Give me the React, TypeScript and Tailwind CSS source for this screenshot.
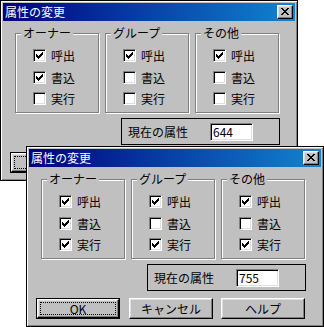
import React from "react";

const CHECK = [
  [6, 0, 1], [5, 1, 2], [0, 2, 1], [4, 2, 3], [0, 3, 2], [3, 3, 3], [0, 4, 5], [1, 5, 3], [2, 6, 1],
];
const XG = [
  [0, 0, 2], [6, 0, 2], [1, 1, 2], [5, 1, 2], [2, 2, 4], [3, 3, 2], [2, 4, 4], [1, 5, 2], [5, 5, 2], [0, 6, 2], [6, 6, 2],
];
const toPath = (r: number[][]) => r.map(([x, y, w]) => `M${x} ${y}h${w}v1h-${w}z`).join("");

function CheckBox({ checked, label }: { checked: boolean; label: string }) {
  return (
    <div className="flex items-center gap-[5px] h-[13px]">
      <div className="w-[13px] h-[13px] bg-white border border-t-[#808080] border-l-[#808080] border-b-white border-r-white shadow-[inset_1px_1px_0_#000,inset_-1px_-1px_0_#dfdfdf] flex items-start pl-[2px] pt-[2px] shrink-0">
        {checked && (
          <svg width="7" height="7" viewBox="0 0 7 7" shapeRendering="crispEdges">
            <path d={toPath(CHECK)} fill="#000" />
          </svg>
        )}
      </div>
      <span className="text-[12px] leading-[13px] text-black">{label}</span>
    </div>
  );
}

function Group({ title, values }: { title: string; values: boolean[] }) {
  const labels = ["呼出", "書込", "実行"];
  return (
    <div className="relative w-[84px] pt-[6px]">
      <div className="h-[80px] border border-[#808080] shadow-[1px_1px_0_#fff,inset_1px_1px_0_#fff] pl-[17px] pt-[15px] flex flex-col gap-[8.5px]">
        {labels.map((l, i) => (
          <CheckBox key={l} checked={values[i]} label={l} />
        ))}
      </div>
      <span className="absolute left-[6px] top-0 px-[2px] bg-[#c0c0c0] text-[12px] leading-[12px] text-black">{title}</span>
    </div>
  );
}

function Btn({ children, def, cls }: { children: React.ReactNode; def?: boolean; cls: string }) {
  const inner = (
    <div className="relative flex-1 self-stretch flex items-center justify-center border border-t-white border-l-white border-b-black border-r-black shadow-[inset_-1px_-1px_0_#808080,inset_1px_1px_0_#dfdfdf] text-[12px] leading-[13px] text-black">
      {children}
      {def && <div className="absolute inset-[2px] border border-dotted border-black" />}
    </div>
  );
  return (
    <div className={`w-[84px] h-[21px] flex ${def ? "border border-black" : ""} ${cls}`}>{inner}</div>
  );
}

function Dialog({ pos, owner, group, other, value }: { pos: string; owner: boolean[]; group: boolean[]; other: boolean[]; value: string }) {
  return (
    <div className={`absolute ${pos} w-[298px] h-[181px] bg-[#c0c0c0] border border-black shadow-[inset_1px_1px_0_#fff,inset_-1px_-1px_0_#808080] p-[2px] flex flex-col`}>
      <div className="h-[18px] bg-[linear-gradient(to_right,#000080,#1084d0)] flex items-center justify-between pl-[2px] pr-[2px]">
        <span className="text-white text-[12px] leading-[14px]">属性の変更</span>
        <div className="w-[16px] h-[14px] bg-[#c0c0c0] border border-t-white border-l-white border-b-black border-r-black shadow-[inset_-1px_-1px_0_#808080,inset_1px_1px_0_#dfdfdf] flex items-start pl-[3px] pt-[2px]">
          <svg width="8" height="7" viewBox="0 0 8 7" shapeRendering="crispEdges">
            <path d={toPath(XG)} fill="#000" />
          </svg>
        </div>
      </div>
      <div className="flex flex-col pt-[6px] pl-[12px]">
        <div className="w-[264px] flex flex-col items-end">
          <div className="flex gap-[6px]">
            <Group title="オーナー" values={owner} />
            <Group title="グループ" values={group} />
            <Group title="その他" values={other} />
          </div>
          <div className="mt-[5px] w-[159px] h-[27px] border border-black flex items-center pl-[6px] mr-[-1px]">
            <span className="text-[12px] leading-[13px] text-black w-[82px]">現在の属性</span>
            <div className="w-[43px] h-[18px] bg-white border border-t-[#808080] border-l-[#808080] border-b-white border-r-white shadow-[inset_1px_1px_0_#000,inset_-1px_-1px_0_#dfdfdf] flex items-center pl-[2px] text-[12px] leading-[13px] text-black">
              {value}
            </div>
          </div>
        </div>
        <div className="flex mt-[7px] ml-[-5px]">
          <Btn def cls="mr-[9px]">OK</Btn>
          <Btn cls="mr-[8px]">キャンセル</Btn>
          <Btn cls="">ヘルプ</Btn>
        </div>
      </div>
    </div>
  );
}

export default function App() {
  return (
    <div className="relative w-[324px] h-[327px] overflow-hidden bg-white font-['Noto_Sans_CJK_JP',sans-serif]">
      <Dialog pos="left-0 top-0" owner={[true, true, false]} group={[true, false, false]} other={[true, false, false]} value="644" />
      <Dialog pos="left-[26px] top-[146px]" owner={[true, true, true]} group={[true, false, true]} other={[true, false, true]} value="755" />
    </div>
  );
}
